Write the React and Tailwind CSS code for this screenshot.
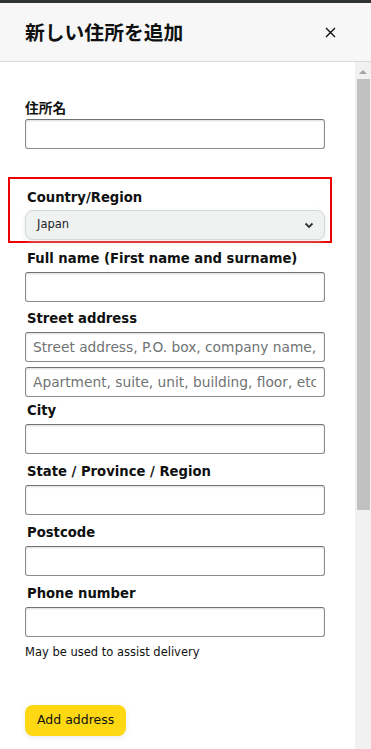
import React from "react";

const labelCls =
  "block h-[19px] text-[13.2px] leading-[19px] font-bold text-[#0f1111] pl-[2px]";
const inputCls =
  "block w-[300px] h-[30px] border border-[#888c8c] border-t-[#6f7373] rounded-[3px] bg-white pl-[7px] pr-[8px] text-[13.75px] text-[#0f1111] placeholder:text-[#6f7373] shadow-[inset_0_1px_2px_rgba(15,17,17,0.15)] outline-none";

function Field({ label, mt, children }) {
  return (
    <div style={{ marginTop: mt }}>
      <div className={labelCls}>{label}</div>
      <div className="mt-[4px]">{children}</div>
    </div>
  );
}

export default function App() {
  return (
    <div
      className="w-[371px] h-[749px] overflow-hidden bg-white flex flex-col"
      style={{ fontFamily: '"DejaVu Sans", "Noto Sans CJK JP", sans-serif' }}
    >
      <div className="h-[3px] bg-[#303333] shrink-0" />
      <div className="h-[59px] shrink-0 bg-[#f7f7f7] border-b border-[#d5d9d9] flex items-center justify-between pl-[25px] pr-[35px]">
        <div
          className="text-[19.8px] font-bold text-[#0f1111] leading-none"
          style={{ fontFamily: '"Noto Sans CJK JP", sans-serif' }}
        >
          新しい住所を追加
        </div>
        <svg width="11" height="11" viewBox="0 0 11 11" className="mt-[1px]">
          <path d="M1 1 L10 10 M10 1 L1 10" stroke="#0f1111" strokeWidth="1.4" />
        </svg>
      </div>
      <div className="flex flex-1 min-h-0">
        <div className="flex-1 pl-[25px]">
          <div className="pt-[36px]">
            <div
              className="block h-[19px] text-[13.7px] leading-[19px] font-bold text-[#0f1111]"
              style={{ fontFamily: '"Noto Sans CJK JP", sans-serif' }}
            >
              住所名
            </div>
            <input className={"mt-[2px] " + inputCls} />
          </div>

          <div className="mt-[28px] -ml-[17px] w-[324px] h-[66px] border-2 border-[#ee0000] pl-[15px] pr-[5px] pt-[9px]">
            <div className={labelCls}>Country/Region</div>
            <div className="mt-[3px] w-[300px] h-[30px] rounded-[8px] border border-[#d5d9d9] bg-[#f0f2f2] shadow-[0_2px_5px_rgba(213,217,217,0.5)] flex items-center justify-between pl-[11px] pr-[10px]">
              <span className="text-[11.5px] text-[#222]">Japan</span>
              <svg width="10" height="7" viewBox="0 0 10 7">
                <path d="M1.5 1.5 L5 5 L8.5 1.5" stroke="#333" strokeWidth="1.8" fill="none" />
              </svg>
            </div>
          </div>

          <Field label="Full name (First name and surname)" mt={6}>
            <input className={inputCls} />
          </Field>
          <Field label="Street address" mt={7}>
            <input
              className={inputCls}
              placeholder="Street address, P.O. box, company name, c/o"
            />
            <input
              className={"mt-[5px] " + inputCls}
              placeholder="Apartment, suite, unit, building, floor, etc."
            />
          </Field>
          <Field label="City" mt={4}>
            <input className={inputCls} />
          </Field>
          <Field label="State / Province / Region" mt={8}>
            <input className={inputCls} />
          </Field>
          <Field label="Postcode" mt={8}>
            <input className={inputCls} />
          </Field>
          <Field label="Phone number" mt={8}>
            <input className={inputCls} />
          </Field>
          <div className="mt-[7px] text-[11.5px] leading-[16px] text-[#0f1111]">
            May be used to assist delivery
          </div>
          <button className="mt-[45px] h-[31px] px-[12px] rounded-[8px] bg-[#ffd814] shadow-[0_2px_5px_rgba(213,217,217,0.5)] text-[12.5px] text-[#0f1111]">
            Add address
          </button>
        </div>
        <div className="w-[16px] shrink-0 bg-[#f1f1f1] flex flex-col items-center">
          <svg width="8" height="5" viewBox="0 0 8 5" className="mt-[7px]">
            <path d="M0 5 L4 1 L8 5 Z" fill="#a3a3a3" />
          </svg>
          <div className="mt-[5px] ml-[1px] w-[13px] h-[431px] bg-[#c1c1c1]" />
        </div>
      </div>
    </div>
  );
}
